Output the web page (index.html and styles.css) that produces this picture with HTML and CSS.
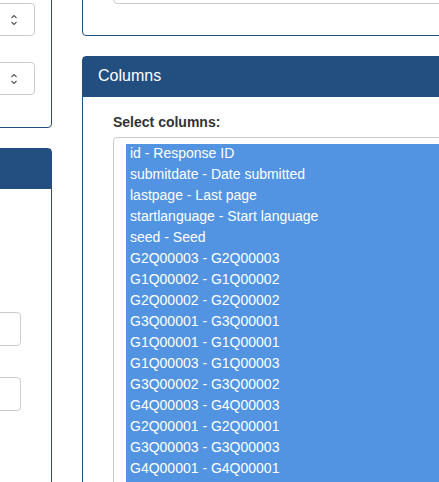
FILE: index.html
```html
<!DOCTYPE html>
<html lang="en">
<head>
<meta charset="utf-8">
<title>Export responses</title>
<link rel="stylesheet" href="styles.css">
</head>
<body>
<div class="page">
  <div class="col col-left">
    <div class="card card-top-left">
      <div class="card-body body-top-left">
        <div class="fake-select">
          <svg class="chev" width="8" height="16" viewBox="0 0 8 16"><polyline points="1.5,6 4,3.5 6.5,6"/><polyline points="1.5,10 4,12.5 6.5,10"/></svg>
        </div>
        <div class="fake-select">
          <svg class="chev" width="8" height="16" viewBox="0 0 8 16"><polyline points="1.5,6 4,3.5 6.5,6"/><polyline points="1.5,10 4,12.5 6.5,10"/></svg>
        </div>
      </div>
    </div>
    <div class="card">
      <div class="card-header"></div>
      <div class="card-body body-left">
        <div class="text-input"></div>
        <div class="text-input"></div>
      </div>
    </div>
  </div>
  <div class="col col-right">
    <div class="card card-top-right">
      <div class="card-body body-top-right">
        <div class="text-input wide"></div>
      </div>
    </div>
    <div class="card">
      <div class="card-header">Columns</div>
      <div class="card-body body-right">
        <div class="label">Select columns:</div>
        <div class="listbox" role="listbox" aria-multiselectable="true">
          <div class="opt">id - Response ID</div>
          <div class="opt">submitdate - Date submitted</div>
          <div class="opt">lastpage - Last page</div>
          <div class="opt">startlanguage - Start language</div>
          <div class="opt">seed - Seed</div>
          <div class="opt">G2Q00003 - G2Q00003</div>
          <div class="opt">G1Q00002 - G1Q00002</div>
          <div class="opt">G2Q00002 - G2Q00002</div>
          <div class="opt">G3Q00001 - G3Q00001</div>
          <div class="opt">G1Q00001 - G1Q00001</div>
          <div class="opt">G1Q00003 - G1Q00003</div>
          <div class="opt">G3Q00002 - G3Q00002</div>
          <div class="opt">G4Q00003 - G4Q00003</div>
          <div class="opt">G2Q00001 - G2Q00001</div>
          <div class="opt">G3Q00003 - G3Q00003</div>
          <div class="opt">G4Q00001 - G4Q00001</div>
          <div class="opt filler"></div>
        </div>
      </div>
    </div>
  </div>
</div>
</body>
</html>
```

FILE: styles.css
```css
html, body {
  margin: 0;
  padding: 0;
  background: #fff;
  overflow: hidden;
  height: 482px;
}
body {
  font-family: "Liberation Sans", Arial, sans-serif;
  font-size: 14px;
  color: #333;
}
.page {
  display: flex;
  align-items: flex-start;
  gap: 30px;
  margin-left: -148px;
}
.col {
  display: flex;
  flex-direction: column;
  gap: 20px;
  flex: none;
}
.col-left { width: 200px; }
.col-right { width: 440px; }

.card {
  border: 1px solid #224f7f;
  border-radius: 4px;
  background: #fff;
}
.card-header {
  background: #224f7f;
  color: #fff;
  font-size: 16px;
  line-height: 20px;
  height: 20px;
  padding: 9px 15px 11px;
}

.card-top-left { margin-top: -20px; }
.body-top-left {
  padding: 22px 16px 32px 30px;
  display: flex;
  flex-direction: column;
  gap: 26px;
}
.fake-select {
  height: 31px;
  border: 1px solid #ccc;
  border-radius: 4px;
  display: flex;
  align-items: center;
  justify-content: flex-end;
  padding-right: 16px;
}
.chev {
  fill: none;
  stroke: #555;
  stroke-width: 1.1;
}

.body-left {
  padding: 123px 30px 0 30px;
  height: 400px;
  display: flex;
  flex-direction: column;
  gap: 31px;
}
.text-input {
  height: 32px;
  border: 1px solid #ccc;
  border-radius: 4px;
}

.card-top-right { margin-top: -60px; }
.body-top-right {
  padding: 29px 15px 31px 30px;
}

.body-right {
  padding: 15px 30px 0;
  height: 420px;
}
.label {
  font-weight: bold;
  line-height: 20px;
  margin-bottom: 5px;
}
.listbox {
  border: 1px solid #ccc;
  border-radius: 4px;
  padding: 6px 12px;
  height: 400px;
  overflow: hidden;
}
.opt {
  background: #5294e2;
  color: #fff;
  font-size: 14px;
  line-height: 18px;
  padding: 0 4px 3px;
  white-space: nowrap;
}
.opt.filler {
  height: 40px;
  padding: 0;
}
```
